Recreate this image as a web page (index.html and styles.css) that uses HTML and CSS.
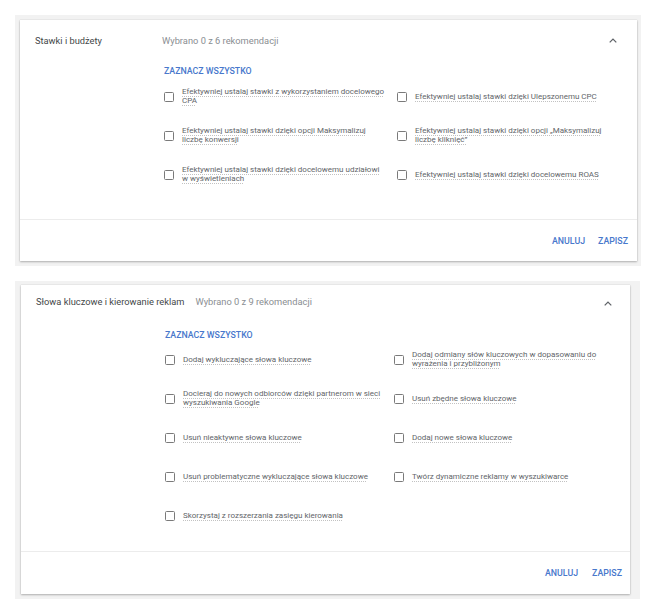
FILE: index.html
```html
<!DOCTYPE html>
<html lang="pl">
<head>
<meta charset="utf-8">
<title>Rekomendacje</title>
<link rel="stylesheet" href="styles.css">
</head>
<body>
<div class="page">
  <div class="frame frame-1">
    <section class="card card-1">
      <header class="card-head">
        <h2 class="card-title">Stawki i budżety</h2>
        <span class="card-count">Wybrano 0 z 6 rekomendacji</span>
        <svg class="chevron" width="8" height="5" viewBox="0 0 8 5"><polyline points="0.7,4.4 4,1.1 7.3,4.4" fill="none" stroke="#5f6368" stroke-width="1.3"/></svg>
      </header>
      <div class="card-body">
        <a class="select-all">ZAZNACZ WSZYSTKO</a>
        <div class="options">
          <label class="option"><span class="box"></span><span class="text">Efektywniej ustalaj stawki z wykorzystaniem docelowego CPA</span></label>
          <label class="option"><span class="box"></span><span class="text">Efektywniej ustalaj stawki dzięki Ulepszonemu CPC</span></label>
          <label class="option"><span class="box"></span><span class="text">Efektywniej ustalaj stawki dzięki opcji Maksymalizuj liczbę konwersji</span></label>
          <label class="option"><span class="box"></span><span class="text">Efektywniej ustalaj stawki dzięki opcji „Maksymalizuj liczbę kliknięć”</span></label>
          <label class="option"><span class="box"></span><span class="text">Efektywniej ustalaj stawki dzięki docelowemu udziałowi w wyświetleniach</span></label>
          <label class="option"><span class="box"></span><span class="text">Efektywniej ustalaj stawki dzięki docelowemu ROAS</span></label>
        </div>
      </div>
      <footer class="card-foot">
        <a class="btn">ANULUJ</a>
        <a class="btn">ZAPISZ</a>
      </footer>
    </section>
  </div>

  <div class="frame frame-2">
    <section class="card card-2">
      <header class="card-head">
        <h2 class="card-title">Słowa kluczowe i kierowanie reklam</h2>
        <span class="card-count">Wybrano 0 z 9 rekomendacji</span>
        <svg class="chevron" width="8" height="5" viewBox="0 0 8 5"><polyline points="0.7,4.4 4,1.1 7.3,4.4" fill="none" stroke="#5f6368" stroke-width="1.3"/></svg>
      </header>
      <div class="card-body">
        <a class="select-all">ZAZNACZ WSZYSTKO</a>
        <div class="options">
          <label class="option"><span class="box"></span><span class="text">Dodaj wykluczające słowa kluczowe</span></label>
          <label class="option"><span class="box"></span><span class="text">Dodaj odmiany słów kluczowych w dopasowaniu do wyrażenia i przybliżonym</span></label>
          <label class="option"><span class="box"></span><span class="text">Docieraj do nowych odbiorców dzięki partnerom w sieci wyszukiwania Google</span></label>
          <label class="option"><span class="box"></span><span class="text">Usuń zbędne słowa kluczowe</span></label>
          <label class="option"><span class="box"></span><span class="text">Usuń nieaktywne słowa kluczowe</span></label>
          <label class="option"><span class="box"></span><span class="text">Dodaj nowe słowa kluczowe</span></label>
          <label class="option"><span class="box"></span><span class="text">Usuń problematyczne wykluczające słowa kluczowe</span></label>
          <label class="option"><span class="box"></span><span class="text">Twórz dynamiczne reklamy w wyszukiwarce</span></label>
          <label class="option"><span class="box"></span><span class="text">Skorzystaj z rozszerzania zasięgu kierowania</span></label>
        </div>
      </div>
      <footer class="card-foot">
        <a class="btn">ANULUJ</a>
        <a class="btn">ZAPISZ</a>
      </footer>
    </section>
  </div>
</div>
</body>
</html>
```

FILE: styles.css
```css
* { box-sizing: border-box; }
html, body { margin: 0; padding: 0; background: #ffffff; }
body { font-family: Roboto, "Liberation Sans", Arial, sans-serif; color: #3c4043; }

.page {
  padding: 15px 0 0 15px;
  display: flex;
  flex-direction: column;
  gap: 15px;
}

.frame { background: #f2f2f2; }
.frame-1 { width: 626px; padding: 5px 4px 5px 5px; }
.frame-2 { width: 625px; padding: 4px 10px 5px 6px; }

.card {
  background: #ffffff;
  box-shadow: 0 1px 2px rgba(0,0,0,0.26), 0 0 1px rgba(0,0,0,0.16);
  display: flex;
  flex-direction: column;
}

.card-head {
  display: flex;
  align-items: center;
  padding-left: 15px;
  height: 12px;
  box-sizing: content-box;
}
.card-1 .card-head { padding-top: 15px; padding-right: 20px; }
.card-2 .card-head { padding-top: 11px; padding-right: 18px; }

.card-title {
  margin: 0 11px 0 0;
  min-width: 116px;
  font-size: 9.3px;
  line-height: 12px;
  font-weight: 400;
  color: #444749;
  white-space: nowrap;
}
.card-count {
  font-size: 9.3px;
  line-height: 12px;
  color: #8a8e92;
  flex: 1;
  white-space: nowrap;
}
.chevron { display: block; }
.card-1 .chevron { margin-top: -1px; }
.card-2 .chevron { margin-top: 2px; }

.card-body {
  margin-left: 144px;
  display: flex;
  flex-direction: column;
  align-items: flex-start;
}
.card-1 .card-body { padding-top: 19px; padding-bottom: 34px; }
.card-2 .card-body { padding-top: 22px; padding-bottom: 25px; }

.select-all, .btn {
  font-size: 8.8px;
  line-height: 10px;
  font-weight: 500;
  color: #4878cc;
  text-decoration: none;
  white-space: nowrap;
}

.options {
  display: grid;
  row-gap: 19px;
  grid-auto-rows: 20px;
  align-items: center;
}
.card-1 .options { grid-template-columns: 233px 220px; margin-top: 11px; }
.card-2 .options { grid-template-columns: 229px 220px; margin-top: 10px; }

.option {
  display: flex;
  align-items: center;
  gap: 8px;
}
.box {
  flex: none;
  width: 10px;
  height: 10px;
  border: 1.3px solid #7a7a7a;
  border-radius: 1.5px;
}
.text {
  max-width: 204px;
  font-size: 8px;
  line-height: 8.6px;
  color: #626569;
  text-decoration: underline dotted #c2c2c2;
  text-underline-offset: 1.5px;
}

.card-foot {
  border-top: 1px solid #ececec;
  display: flex;
  justify-content: flex-end;
  align-items: center;
}
.card-1 .card-foot { height: 42px; padding-right: 9px; gap: 13px; }
.card-2 .card-foot { height: 43px; padding-right: 8px; gap: 14px; }
```
